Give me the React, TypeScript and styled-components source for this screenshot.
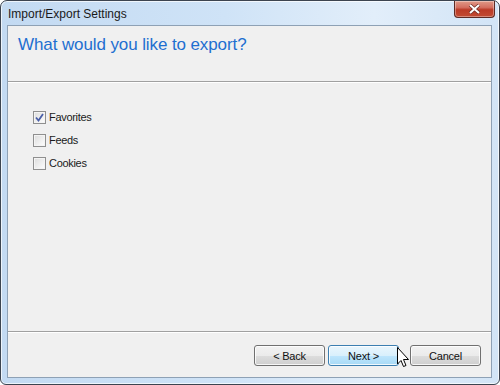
import React from "react";
import styled, { createGlobalStyle } from "styled-components";

const Global = createGlobalStyle`
  html, body { margin: 0; padding: 0; background: #ffffff; }
  body { font-family: "Liberation Sans", Arial, sans-serif; }
`;

const Window = styled.div`
  position: relative;
  box-sizing: border-box;
  width: 500px;
  height: 385px;
  border: 1px solid #3c4450;
  border-radius: 7px 7px 6px 6px;
  background: linear-gradient(90deg, #c3daf2 0%, #cfe3f7 45%, #e2eefa 75%, #d2e4f6 100%);
  padding: 0 7px 6px 6px;
  display: flex;
  flex-direction: column;
  box-shadow: inset 0 0 0 1px rgba(255, 255, 255, 0.7);
`;

const TitleBar = styled.div`
  height: 24px;
  display: flex;
  align-items: center;
  justify-content: space-between;
  padding-left: 1px;
`;

const Title = styled.span`
  font-size: 12px;
  color: #1a1a1a;
  margin-top: 1px;
`;

const CloseBtn = styled.div`
  box-sizing: border-box;
  width: 41px;
  height: 17px;
  margin-top: -8px;
  margin-right: -3px;
  border: 1px solid #5d2a24;
  border-top: none;
  border-radius: 0 0 4px 4px;
  background: linear-gradient(180deg, #e09a88 0%, #d46f60 40%, #bb3a26 55%, #c24b33 100%);
  box-shadow: inset 0 0 0 1px rgba(255, 255, 255, 0.35);
  display: flex;
  align-items: center;
  justify-content: center;
  padding-top: 1px;
`;

const Client = styled.div`
  flex: 1;
  box-sizing: border-box;
  border: 1px solid #8ea1b5;
  background: #f0f0f0;
  display: flex;
  flex-direction: column;
`;

const Header = styled.div`
  height: 56px;
  box-sizing: border-box;
  padding: 9px 0 0 10px;
  border-bottom: 1px solid #a0a0a0;
`;

const Heading = styled.h1`
  margin: 0;
  font-weight: normal;
  font-size: 17px;
  color: #1e6fd0;
  letter-spacing: -0.1px;
`;

const Body = styled.div`
  flex: 1;
  border-top: 1px solid #ffffff;
  padding: 27px 0 0 25px;
  display: flex;
  flex-direction: column;
  gap: 9px;
`;

const Option = styled.label`
  display: flex;
  align-items: center;
  gap: 3px;
  font-size: 11px;
  letter-spacing: -0.3px;
  color: #1a1a1a;
  height: 14px;
`;

const Box = styled.span`
  box-sizing: border-box;
  width: 13px;
  height: 13px;
  border: 1px solid #8f8f8f;
  background: linear-gradient(135deg, #dcdcdc 0%, #f4f4f4 70%, #ffffff 100%);
  box-shadow: inset 0 0 0 1px #f4f4f4;
  display: flex;
  align-items: center;
  justify-content: center;
`;

const Footer = styled.div`
  box-sizing: border-box;
  height: 46px;
  border-top: 1px solid #a0a0a0;
  box-shadow: inset 0 1px 0 #ffffff;
  display: flex;
  justify-content: flex-end;
  align-items: flex-start;
  padding: 13px 10px 0 0;
  position: relative;
`;

const Button = styled.button<{ $hot?: boolean; $gap?: number }>`
  box-sizing: border-box;
  width: 71px;
  height: 21px;
  margin-left: ${(p) => p.$gap ?? 0}px;
  border-radius: 3px;
  border: 1px solid ${(p) => (p.$hot ? "#3c7fb1" : "#707070")};
  background: ${(p) =>
    p.$hot
      ? "linear-gradient(180deg, #eaf6fd 0%, #d9f0fc 50%, #bee6fd 51%, #a7d9f5 100%)"
      : "linear-gradient(180deg, #f2f2f2 0%, #ebebeb 50%, #dddddd 51%, #cfcfcf 100%)"};
  box-shadow: inset 0 0 0 1px rgba(255, 255, 255, 0.8);
  font-family: "Liberation Sans", Arial, sans-serif;
  font-size: 11px;
  letter-spacing: -0.2px;
  color: #111;
  padding: 0;
`;

const Cursor = styled.svg`
  position: absolute;
  left: 389px;
  top: 15px;
`;

const Check = () => (
  <svg width="9" height="9" viewBox="0 0 9 9">
    <path d="M1 4.5 L3.5 7.5 L8 1" fill="none" stroke="#4a5fa8" strokeWidth="1.8" />
  </svg>
);

const options = [
  { label: "Favorites", checked: true },
  { label: "Feeds", checked: false },
  { label: "Cookies", checked: false },
];

export default function App() {
  return (
    <>
      <Global />
      <Window>
        <TitleBar>
          <Title>Import/Export Settings</Title>
          <CloseBtn>
            <svg width="13" height="10" viewBox="0 0 13 10">
              <path d="M2 1 L11 9 M11 1 L2 9" stroke="#6a2a22" strokeWidth="3.4" />
              <path d="M2 1 L11 9 M11 1 L2 9" stroke="#ffffff" strokeWidth="2" />
            </svg>
          </CloseBtn>
        </TitleBar>
        <Client>
          <Header>
            <Heading>What would you like to export?</Heading>
          </Header>
          <Body>
            {options.map((o) => (
              <Option key={o.label}>
                <Box>{o.checked && <Check />}</Box>
                {o.label}
              </Option>
            ))}
          </Body>
          <Footer>
            <Button>&lt; Back</Button>
            <Button $hot $gap={3}>Next &gt;</Button>
            <Button $gap={11}>Cancel</Button>
            <Cursor width="13" height="22" viewBox="0 0 13 22">
              <path
                d="M0.5 0.5 L0.5 17 L4 13.5 L6.5 19.5 L9 18.5 L6.5 12.5 L11.5 12.5 Z"
                fill="#ffffff"
                stroke="#000000"
                strokeWidth="1"
                strokeLinejoin="round"
              />
            </Cursor>
          </Footer>
        </Client>
      </Window>
    </>
  );
}
